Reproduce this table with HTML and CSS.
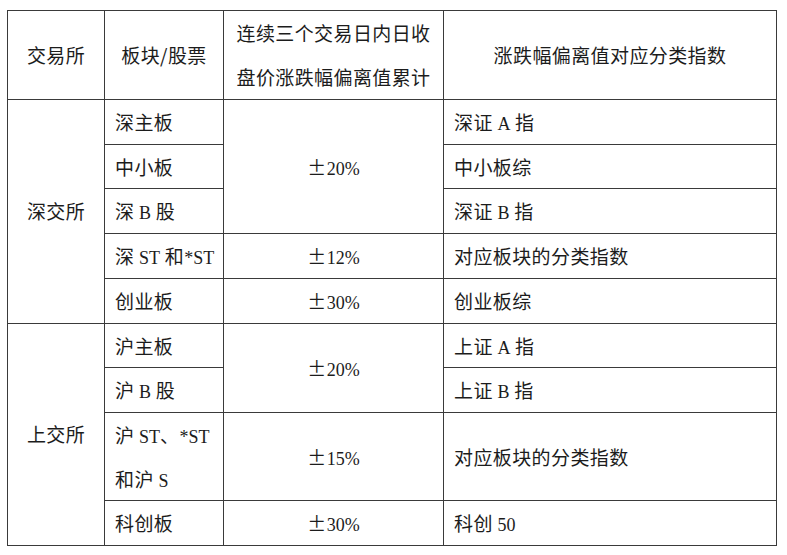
FILE: index.html
```html
<!DOCTYPE html>
<html lang="zh-CN">
<head>
<meta charset="utf-8">
<title>涨跌幅偏离值</title>
<link rel="stylesheet" href="styles.css">
</head>
<body>
<div class="page">
<table class="grid">
  <colgroup>
    <col class="c1"><col class="c2"><col class="c3"><col class="c4">
  </colgroup>
  <thead>
    <tr>
      <th>交易所</th>
      <th>板块/股票</th>
      <th>连续三个交易日内日收<br>盘价涨跌幅偏离值累计</th>
      <th>涨跌幅偏离值对应分类指数</th>
    </tr>
  </thead>
  <tbody>
    <tr>
      <td class="mid" rowspan="5">深交所</td>
      <td class="left">深主板</td>
      <td class="mid" rowspan="3">±<span class="lat">20%</span></td>
      <td class="left">深证 <span class="lat">A</span> 指</td>
    </tr>
    <tr>
      <td class="left">中小板</td>
      <td class="left">中小板综</td>
    </tr>
    <tr>
      <td class="left">深 <span class="lat">B</span> 股</td>
      <td class="left">深证 <span class="lat">B</span> 指</td>
    </tr>
    <tr>
      <td class="left">深 <span class="lat">ST</span> 和<span class="lat">*ST</span></td>
      <td class="mid">±<span class="lat">12%</span></td>
      <td class="left">对应板块的分类指数</td>
    </tr>
    <tr>
      <td class="left">创业板</td>
      <td class="mid">±<span class="lat">30%</span></td>
      <td class="left">创业板综</td>
    </tr>
    <tr>
      <td class="mid" rowspan="4">上交所</td>
      <td class="left">沪主板</td>
      <td class="mid" rowspan="2">±<span class="lat">20%</span></td>
      <td class="left">上证 <span class="lat">A</span> 指</td>
    </tr>
    <tr>
      <td class="left">沪 <span class="lat">B</span> 股</td>
      <td class="left">上证 <span class="lat">B</span> 指</td>
    </tr>
    <tr>
      <td class="left">沪 <span class="lat">ST</span>、<span class="lat">*ST</span><br>和沪 <span class="lat">S</span></td>
      <td class="mid">±<span class="lat">15%</span></td>
      <td class="left">对应板块的分类指数</td>
    </tr>
    <tr>
      <td class="left">科创板</td>
      <td class="mid">±<span class="lat">30%</span></td>
      <td class="left">科创 <span class="lat">50</span></td>
    </tr>
  </tbody>
</table>
</div>
</body>
</html>
```

FILE: styles.css
```css
html, body {
  margin: 0;
  padding: 0;
  background: #ffffff;
}

.page {
  padding: 10px 0 0 7px;
}

.grid {
  border-collapse: collapse;
  table-layout: fixed;
  width: 769px;
  font-family: "Noto Sans CJK SC", "Liberation Serif", sans-serif;
  font-size: 19px;
  letter-spacing: 0.4px;
  color: #1c1c1c;
  border: 1px solid #3a3a3a;
}

.c1 { width: 97px; }
.c2 { width: 119px; }
.c3 { width: 220px; }
.c4 { width: 333px; }

.grid th,
.grid td {
  border: 1px solid #3a3a3a;
  padding: 0;
  line-height: 43.7px;
  font-weight: normal;
  vertical-align: middle;
  white-space: nowrap;
}

.grid th {
  text-align: center;
  height: 88px;
}

.grid td.mid {
  text-align: center;
}

.grid td.left {
  text-align: left;
  padding-left: 10px;
}

.lat {
  font-family: "Liberation Serif", serif;
  font-size: 18px;
  line-height: 1;
  letter-spacing: 0;
}
```
